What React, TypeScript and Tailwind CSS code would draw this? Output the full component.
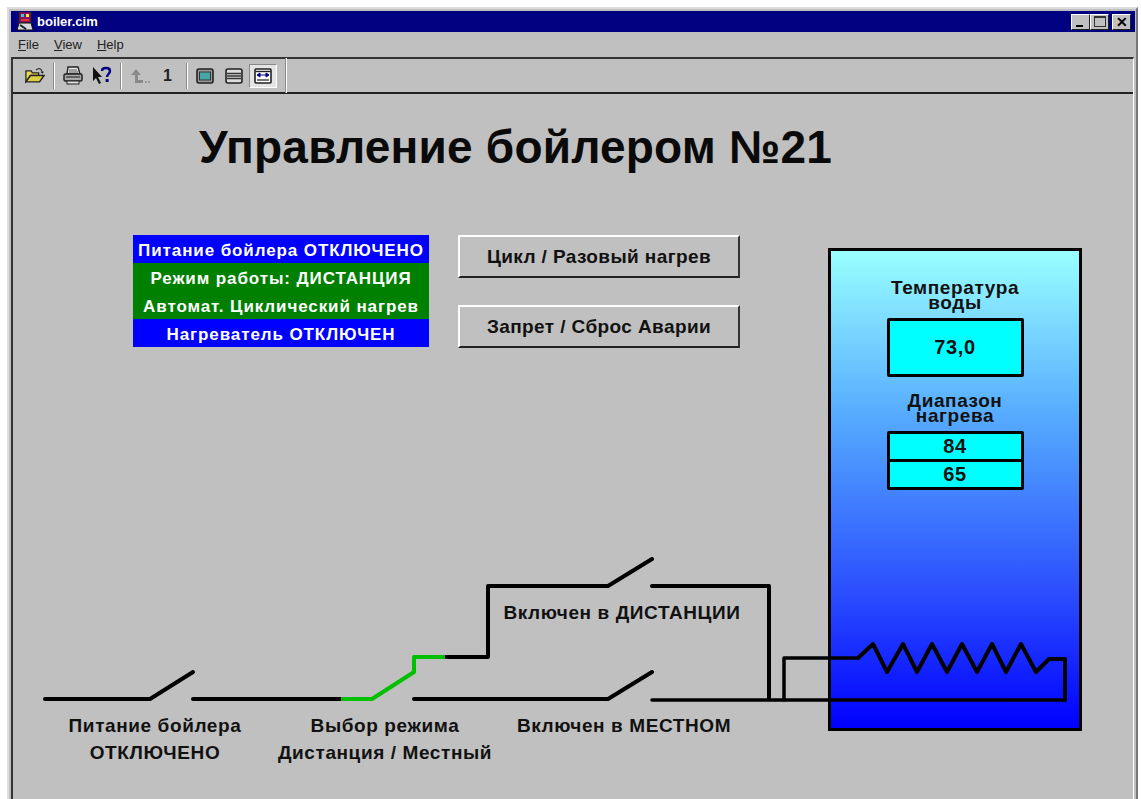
const sans = "font-['Liberation_Sans',Arial,sans-serif]";

// Window caption buttons
function CaptionButton({ children, className = "" }: { children: React.ReactNode; className?: string }) {
  return (
    <div
      className={`flex h-[16px] w-[19px] items-center justify-center border-t border-l border-t-white border-l-white border-r border-b border-r-[#222] border-b-[#222] bg-[#c0c0c0] ${className}`}
    >
      {children}
    </div>
  );
}

function Separator() {
  return <div className="mx-[8px] h-[26px] w-[2px] border-l border-r border-l-[#8c8c8c] border-r-white" />;
}

function FolderIcon() {
  return (
    <svg width="20" height="17" viewBox="0 0 22 18">
      <path d="M1 4h6l1 2h7v3H6L1 16z" fill="#e8d858" stroke="#222" strokeWidth="1.4" />
      <path d="M6 9h15l-5 7H1z" fill="#dcd040" stroke="#222" strokeWidth="1.6" />
      <path d="M12 3c2-2 5-2 6 0l1 2" fill="none" stroke="#333" strokeWidth="1.3" />
      <path d="M17 5h4l-2 2z" fill="#222" />
    </svg>
  );
}

function PrinterIcon() {
  return (
    <svg width="20" height="19" viewBox="0 0 20 19">
      <path d="M5 1h10l2 7H4z" fill="#e8e8e8" stroke="#222" strokeWidth="1.4" />
      <path d="M6 4h8M6 6h9" stroke="#555" strokeWidth="1" />
      <rect x="1" y="8" width="18" height="7" rx="1.5" fill="#a8a8a8" stroke="#222" strokeWidth="1.5" />
      <path d="M3 11h14" stroke="#333" strokeWidth="1.2" />
      <rect x="4" y="15" width="12" height="3" fill="#ddd" stroke="#222" />
    </svg>
  );
}

function HelpIcon() {
  return (
    <svg width="20" height="19" viewBox="0 0 20 19">
      <path d="M1 1v14l3-3 3 6 2-1-3-6h4z" fill="#111" />
      <path d="M10 5c0-4 8-4 8 0 0 3-3 3-3 6" fill="none" stroke="#000080" strokeWidth="2.4" />
      <rect x="13.6" y="13" width="3" height="3" fill="#000080" />
    </svg>
  );
}

function UpIcon() {
  return (
    <svg width="22" height="16" viewBox="0 0 22 16">
      <path d="M6 1l5 6H8v5h5v3H5V7H1z" fill="#8a8a8a" />
      <path d="M15 13h2v2h-2zM18 13h2v2h-2z" fill="#9a9a9a" />
    </svg>
  );
}

function ScreenIcon() {
  return (
    <svg width="18" height="16" viewBox="0 0 18 16">
      <rect x="1" y="1" width="16" height="14" rx="2" fill="#9a9a9a" stroke="#222" strokeWidth="1.6" />
      <rect x="3.5" y="4" width="11" height="8" fill="#4aa6a6" stroke="#333" />
    </svg>
  );
}

function ListIcon() {
  return (
    <svg width="18" height="16" viewBox="0 0 18 16">
      <rect x="1" y="1" width="16" height="14" rx="2" fill="#ddd" stroke="#222" strokeWidth="1.6" />
      <path d="M2 5.5h14M2 8h14M2 10.5h14" stroke="#333" strokeWidth="1.4" />
    </svg>
  );
}

function FitIcon() {
  return (
    <svg width="18" height="16" viewBox="0 0 18 16">
      <rect x="1" y="1" width="16" height="14" rx="1" fill="#fff" stroke="#222" strokeWidth="1.6" />
      <path d="M1.5 3.5h15" stroke="#222" strokeWidth="1.4" />
      <path d="M3 7l3-2v4zM15 7l-3-2v4zM6 7h6" fill="#000080" stroke="#000080" />
      <path d="M3 12h12" stroke="#555" strokeWidth="1.6" />
    </svg>
  );
}

function AppIcon() {
  return (
    <svg width="18" height="19" viewBox="0 0 18 19">
      <rect x="3" y="0" width="12" height="11" fill="#8a1060" stroke="#222" />
      <rect x="5" y="2" width="3" height="3" fill="#3cc" />
      <rect x="10" y="2" width="3" height="3" fill="#ee3" />
      <rect x="5" y="7" width="8" height="2" fill="#d33" />
      <path d="M1 18l2-7h12l2 7z" fill="#d8d8d8" stroke="#111" />
      <path d="M4 13l6 4" stroke="#123" strokeWidth="2" />
    </svg>
  );
}

// Raised push button on the mimic panel
function PanelButton({ label, className }: { label: string; className: string }) {
  return (
    <div
      className={`absolute flex h-[43px] w-[282px] items-center justify-center border-2 border-t-white border-l-white border-r-[#333] border-b-[#222] pt-[1px] text-[19px] font-bold tracking-[0.4px] text-[#111] ${className}`}
    >
      {label}
    </div>
  );
}

function StatusRow({ label, color }: { label: string; color: string }) {
  return (
    <div className={`flex h-[28px] items-center justify-center whitespace-nowrap pt-[4px] text-[17px] font-bold tracking-[0.9px] text-white ${color}`}>
      {label}
    </div>
  );
}

function Wiring() {
  return (
    <svg className="absolute left-0 top-0" width="1120" height="705" viewBox="13 94 1120 705" fill="none">
      <g stroke="#000" strokeWidth="4" strokeLinejoin="round" strokeLinecap="round">
        <path d="M45 699H150L193 672" />
        <path d="M193 699H342" />
        <path d="M445 657H488V586H608L652 559" />
        <path d="M652 586H769V699" />
        <path d="M414 699H608L652 672" />
        <path d="M652 700H1065" strokeWidth="3.5" />
        <path d="M858 658L873 644L887 672L903 644L917 672L932 644L947 672L962 644L977 672L992 644L1006 672L1021 644L1036 672L1049 659H1065V700" />
        <path d="M784 700V658H858" strokeWidth="3.5" />
      </g>
      <path d="M341 699H372L414 672V657H445" stroke="#00c000" strokeWidth="4" strokeLinejoin="round" />
    </svg>
  );
}

function WireLabel({ lines, className }: { lines: string[]; className: string }) {
  return (
    <div className={`absolute -translate-x-1/2 whitespace-nowrap text-center text-[19px] font-bold leading-[27px] tracking-[0.6px] text-[#111] ${className}`}>
      {lines.map((line) => (
        <div key={line}>{line}</div>
      ))}
    </div>
  );
}

export default function App() {
  return (
    <div className={`h-[799px] w-[1141px] overflow-hidden bg-white pl-[7px] pr-[3px] pt-[7px] ${sans}`}>
      <div className="flex h-full flex-col border-t-[2px] border-l-[2px] border-r-[2px] border-t-[#dcdcdc] border-l-[#dcdcdc] border-r-[#777] bg-[#c0c0c0] pl-[2px] pr-[1px] pt-[2px]">
        {/* caption */}
        <div className="flex h-[21px] shrink-0 items-center justify-between bg-[#000080] pl-[5px] pr-[4px]">
          <div className="flex items-center gap-[3px] text-[13px] font-bold text-white">
            <AppIcon />
            <span>boiler.cim</span>
          </div>
          <div className="flex items-center">
            <CaptionButton>
              <div className="mt-[8px] mr-[3px] h-[2px] w-[7px] bg-black" />
            </CaptionButton>
            <CaptionButton className="mr-[3px]">
              <div className="h-[11px] w-[12px] border border-t-2 border-[#333]" />
            </CaptionButton>
            <CaptionButton>
              <span className="text-[14px] font-bold leading-none text-black">✕</span>
            </CaptionButton>
          </div>
        </div>

        {/* menu */}
        <div className="flex h-[25px] shrink-0 items-center gap-[15px] pl-[7px] text-[13px] text-[#222]">
          <span><u>F</u>ile</span>
          <span><u>V</u>iew</span>
          <span><u>H</u>elp</span>
        </div>

        {/* toolbar + client area */}
        <div className="mr-[1px] flex min-h-0 flex-1 flex-col border-l-[2px] border-t-[2px] border-r border-l-[#333] border-t-[#333] border-r-white">
          <div className="flex h-[35px] shrink-0 items-center border-b-[2px] border-b-[#222] pl-[12px]">
            <FolderIcon />
            <Separator />
            <PrinterIcon />
            <div className="w-[9px]" />
            <HelpIcon />
            <Separator />
            <UpIcon />
            <span className="ml-[11px] w-[10px] text-[16px] font-bold text-[#222]">1</span>
            <div className="w-[5px]" />
            <Separator />
            <ScreenIcon />
            <div className="w-[11px]" />
            <ListIcon />
            <div className="ml-[6px] flex h-[24px] w-[28px] items-center justify-center border border-t-[#888] border-l-[#888] border-r-white border-b-white bg-[#e4e4e4]">
              <FitIcon />
            </div>
            <div className="ml-[8px] h-[35px] w-[2px] border-l border-r border-l-[#8c8c8c] border-r-white" />
          </div>

          <div className="relative min-h-0 flex-1 overflow-hidden bg-[#c0c0c0]">
            <h1 className="absolute left-[186px] top-[23px] whitespace-nowrap text-[46px] font-bold leading-[60px] tracking-[0.2px] text-[#0a0a0a]">
              Управление бойлером №21
            </h1>

            <div className="absolute left-[120px] top-[141px] w-[296px]">
              <StatusRow label="Питание бойлера ОТКЛЮЧЕНО" color="bg-[#0000ff]" />
              <StatusRow label="Режим работы: ДИСТАНЦИЯ" color="bg-[#008000]" />
              <StatusRow label="Автомат. Циклический нагрев" color="bg-[#008000]" />
              <StatusRow label="Нагреватель ОТКЛЮЧЕН" color="bg-[#0000ff]" />
            </div>

            <PanelButton label="Цикл / Разовый нагрев" className="left-[445px] top-[141px]" />
            <PanelButton label="Запрет / Сброс Аварии" className="left-[445px] top-[211px]" />

            {/* boiler tank */}
            <div className="absolute left-[815px] top-[154px] flex h-[483px] w-[254px] flex-col items-center border-[3px] border-black bg-[linear-gradient(to_bottom,#99ffff_0%,#55aaff_35%,#2a4dff_72%,#0000ff_100%)] pt-[29px] text-[19px] font-bold leading-[15px] tracking-[0.6px] text-[#111]">
              <div className="text-center">
                <div>Температура</div>
                <div>воды</div>
              </div>
              <div className="mt-[8px] flex h-[59px] w-[137px] items-center justify-center rounded-[2px] border-[3px] border-black bg-[#00ffff] text-[20px]">
                73,0
              </div>
              <div className="mt-[16px] text-center">
                <div>Диапазон</div>
                <div>нагрева</div>
              </div>
              <div className="mt-[8px] w-[137px] rounded-[2px] border-[3px] border-black bg-black text-[20px]">
                <div className="flex h-[25px] items-center justify-center bg-[#00ffff]">84</div>
                <div className="mt-[3px] flex h-[25px] items-center justify-center bg-[#00ffff]">65</div>
              </div>
            </div>

            <Wiring />

            <WireLabel lines={["Питание бойлера", "ОТКЛЮЧЕНО"]} className="left-[142px] top-[618px]" />
            <WireLabel lines={["Выбор режима", "Дистанция / Местный"]} className="left-[372px] top-[618px]" />
            <WireLabel lines={["Включен в МЕСТНОМ"]} className="left-[611px] top-[618px]" />
            <WireLabel lines={["Включен в ДИСТАНЦИИ"]} className="left-[609px] top-[505px]" />
          </div>
        </div>
      </div>
    </div>
  );
}
